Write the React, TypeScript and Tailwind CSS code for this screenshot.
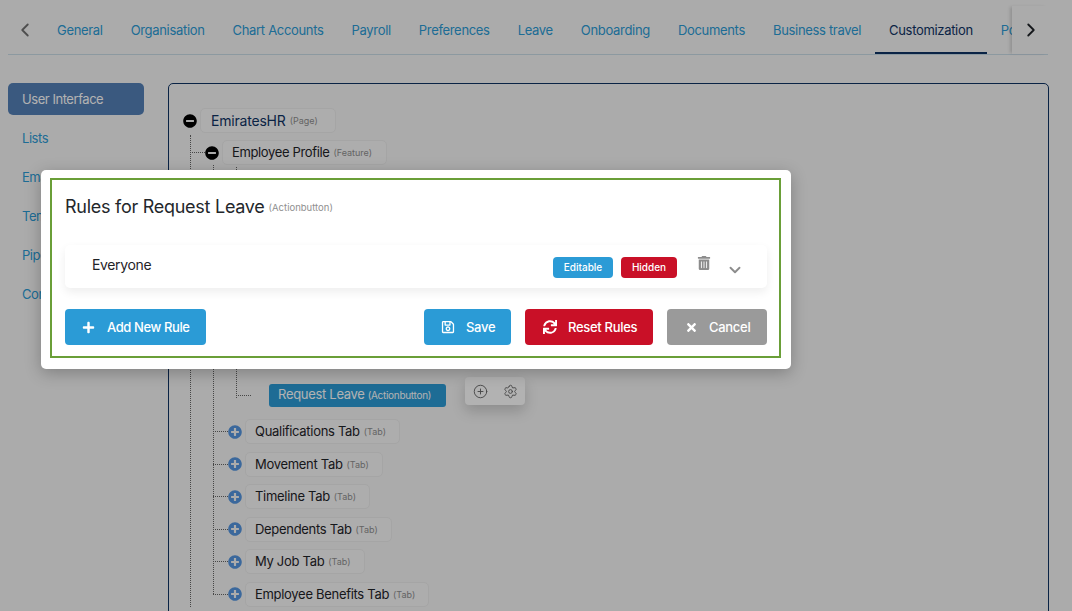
import { ChevronLeft, ChevronRight, ChevronDown, CirclePlus, Settings } from "lucide-react";
import { FaMinusCircle, FaPlusCircle, FaPlus, FaRegSave, FaSync, FaTimes, FaTrashAlt } from "react-icons/fa";

const tabs = ["General", "Organisation", "Chart Accounts", "Payroll", "Preferences", "Leave", "Onboarding", "Documents", "Business travel", "Customization", "Policies"];
const side = ["Lists", "Email", "Templates", "Pipelines", "Configuration"];
const subTabs = ["Qualifications Tab", "Movement Tab", "Timeline Tab", "Dependents Tab", "My Job Tab", "Employee Benefits Tab"];

function Tag({ children }: { children: string }) {
  return <span className="ml-1 text-[9px] text-[#8f8f8f]">{children}</span>;
}

export default function App() {
  return (
    <div className="relative h-[611px] w-[1072px] overflow-hidden bg-[#f5f5f5] font-['Inter',sans-serif] text-[13px] text-[#1f2328]">
      <header className="ml-2 flex h-[55px] w-[1040px] items-stretch border-b border-[#c9dbe6] pt-[6px]">
        <div className="flex w-[35px] items-center pl-[6px] text-[#707070]">
          <ChevronLeft size={22} strokeWidth={2} />
        </div>
        <nav className="flex min-w-0 flex-1 overflow-hidden tracking-[-0.32px]">
          {tabs.map((t) => (
            <a
              key={t}
              className={
                "flex shrink-0 items-center whitespace-nowrap px-[14px] pt-[4px] " +
                (t === "Customization"
                  ? "border-b-2 border-[#0f3364] text-[#0f3364]"
                  : "border-b-2 border-transparent text-[#2b9bd6]")
              }
            >
              {t}
            </a>
          ))}
        </nav>
        <div className="flex w-[36px] shrink-0 items-center justify-center bg-[#f5f5f5] pl-[2px] text-[#1f2328] shadow-[-3px_0_3px_-1px_rgba(0,0,0,0.15)]">
          <ChevronRight size={22} strokeWidth={2} />
        </div>
      </header>

      <main className="mt-[28px] flex items-start pl-2">
        <aside className="w-[136px] shrink-0 tracking-[-0.45px]">
          <div className="flex h-[32px] items-center rounded-[5px] bg-[#5480b6] pl-[14px] pt-[1px] text-white">User Interface</div>
          {side.map((s) => (
            <div key={s} className="mt-[7px] flex h-[32px] items-center pl-[14px] pt-[1px] text-[#2b9bd6]">
              {s}
            </div>
          ))}
        </aside>

        <section className="ml-6 h-[560px] w-[881px] shrink-0 rounded-[5px] border border-[#0f3364] pt-6">
          <div className="flex items-center pl-[14px]">
            <FaMinusCircle size={14} className="text-black" />
            <div className="ml-[3px] flex h-[25px] w-[136px] items-center rounded-[5px] border border-[#ededed] bg-[#f8f8f8] pl-[10px]">
              <span className="text-[14px] tracking-[-0.2px] text-[#0f3364]">EmiratesHR</span>
              <Tag>(Page)</Tag>
            </div>
          </div>

          <div className="relative ml-[21px] pt-[7px]">
            <span className="absolute bottom-0 left-0 top-[2px] border-l border-dotted border-[#666]" />
            <div className="flex items-center">
              <span className="w-[15px] border-t border-dotted border-[#666]" />
              <FaMinusCircle size={14} className="text-black" />
              <div className="ml-[3px] flex h-[25px] w-[165px] items-center rounded-[5px] border border-[#ededed] bg-[#f8f8f8] pl-[9px]">
                <span className="tracking-[-0.36px]">Employee Profile</span>
                <Tag>(Feature)</Tag>
              </div>
            </div>

            <div className="relative ml-[23px] pt-[2px]">
              <span className="absolute bottom-[13px] left-0 top-0 border-l border-dotted border-[#666]" />
              <div className="relative ml-[23px] pt-[214px]">
                <span className="absolute bottom-[11px] left-0 top-0 border-l border-dotted border-[#666]" />
                <div className="flex items-center">
                  <span className="w-[15px] border-t border-dotted border-[#666]" />
                  <div className="ml-[18px] flex h-[23px] w-[177px] items-center rounded-[3px] bg-[#2b9bd6] pl-[9px] text-white">
                    <span className="tracking-[-0.3px]">Request Leave</span>
                    <span className="ml-[3px] text-[10px] tracking-[-0.3px]">(Actionbutton)</span>
                  </div>
                  <div className="relative -top-[4px] ml-[19px] flex h-[28px] w-[60px] rounded-[4px] bg-white text-[#666] shadow-[0_6px_14px_rgba(0,0,0,0.18)]">
                    <span className="flex flex-1 items-center justify-center"><CirclePlus size={15} strokeWidth={1.5} /></span>
                    <span className="flex flex-1 items-center justify-center"><Settings size={15} strokeWidth={1.5} /></span>
                  </div>
                </div>
              </div>
              <div className="pt-[10.4px]">
                {subTabs.map((t) => (
                  <div key={t} className="mb-[7.5px] flex items-center">
                    <span className="w-[15px] border-t border-dotted border-[#666]" />
                    <FaPlusCircle size={14} className="text-[#5596e0]" />
                    <div className="ml-[3px] flex h-[25px] items-center rounded-[5px] border border-[#ededed] bg-[#f8f8f8] pl-[9px] pr-[13px]">
                      <span className="tracking-[-0.3px]">{t}</span>
                      <Tag>(Tab)</Tag>
                    </div>
                  </div>
                ))}
              </div>
            </div>
          </div>
        </section>
      </main>

      <div className="absolute inset-0 bg-black/30">
        <div className="ml-[41px] mt-[170px] h-[199px] w-[750px] rounded-[5px] bg-white pb-[11px] pl-[9px] pr-[10px] pt-2 shadow-[0_4px_16px_rgba(0,0,0,0.25)]">
          <div className="h-full border-2 border-[#6a9f38] pl-[13px] pr-[12px]">
            <div className="flex h-[57px] items-center pb-[5px]">
              <h2 className="text-[18px] font-normal tracking-[-0.27px] text-[#23272b]">Rules for Request Leave</h2>
              <span className="ml-1 mt-[4px] text-[9.5px] text-[#8f8f8f]">(Actionbutton)</span>
            </div>
            <div className="mt-[8px] flex h-[43px] items-center rounded-[5px] bg-white pl-[27px] shadow-[0_4px_10px_rgba(0,0,0,0.07)]">
              <span className="flex-1 pb-[4px] text-[14px] tracking-[-0.35px]">Everyone</span>
              <span className="mt-[2px] flex h-[21px] w-[60px] items-center justify-center rounded-[4px] bg-[#2b9bd6] text-[10px] font-medium text-white">Editable</span>
              <span className="ml-2 mt-[2px] flex h-[21px] w-[56px] items-center justify-center rounded-[4px] bg-[#c91027] text-[10px] font-medium text-white">Hidden</span>
              <FaTrashAlt size={14} className="ml-5 -mt-[8px] text-[#8c8c8c]" />
              <ChevronDown size={18} strokeWidth={2.5} className="ml-[15px] mr-[23px] mt-[7px] text-[#8c8c8c]" />
            </div>
            <div className="mt-[21px] flex">
              <button className="flex h-[36px] w-[141px] items-center rounded-[4px] bg-[#2b9bd6] pl-[17px] font-medium tracking-[-0.4px] text-white">
                <FaPlus size={13} />
                <span className="ml-[12px] pt-[1px]">Add New Rule</span>
              </button>
              <button className="ml-[218px] flex h-[36px] w-[87px] items-center rounded-[4px] bg-[#2b9bd6] pl-[17px] font-medium tracking-[-0.3px] text-white">
                <FaRegSave size={14} />
                <span className="ml-[11px] pt-[1px]">Save</span>
              </button>
              <button className="ml-[14px] flex h-[36px] w-[128px] items-center rounded-[4px] bg-[#c91027] pl-[18px] font-medium tracking-[-0.3px] text-white">
                <FaSync size={14} />
                <span className="ml-[11px] pt-[1px]">Reset Rules</span>
              </button>
              <button className="ml-[14px] flex h-[36px] w-[100px] items-center rounded-[4px] bg-[#9a9a9a] pl-[18px] font-medium tracking-[-0.3px] text-white">
                <FaTimes size={13} />
                <span className="ml-[11px] pt-[1px]">Cancel</span>
              </button>
            </div>
          </div>
        </div>
      </div>
    </div>
  );
}
